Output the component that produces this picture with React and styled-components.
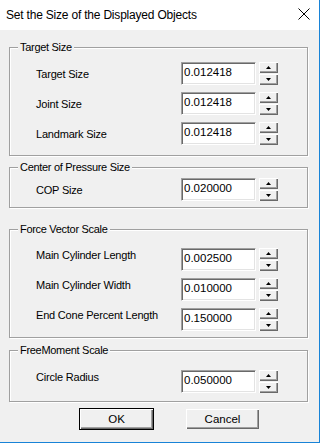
import styled, { createGlobalStyle } from "styled-components";

const groups = [
  {
    title: "Target Size",
    gapBefore: 17,
    padTop: 14,
    padBottom: 10,
    rowGap: 7,
    raise: 0,
    rows: [
      ["Target Size", "0.012418"],
      ["Joint Size", "0.012418"],
      ["Landmark Size", "0.012418"],
    ],
  },
  {
    title: "Center of Pressure Size",
    gapBefore: 11,
    padTop: 10,
    padBottom: 6,
    rowGap: 7,
    raise: 0,
    rows: [["COP Size", "0.020000"]],
  },
  {
    title: "Force Vector Scale",
    gapBefore: 21,
    padTop: 18,
    padBottom: 6,
    rowGap: 7,
    raise: 5,
    rows: [
      ["Main Cylinder Length", "0.002500"],
      ["Main Cylinder Width", "0.010000"],
      ["End Cone Percent Length", "0.150000"],
    ],
  },
  {
    title: "FreeMoment Scale",
    gapBefore: 12,
    padTop: 19,
    padBottom: 8,
    rowGap: 7,
    raise: 5,
    rows: [["Circle Radius", "0.050000"]],
  },
];

function Arrow({ down }) {
  return (
    <svg width="5" height="3" viewBox="0 0 5 3">
      <polygon points={down ? "0,0 5,0 2.5,3" : "0,3 5,3 2.5,0"} fill="#000" />
    </svg>
  );
}

function SpinRow({ label, value, raise }) {
  return (
    <Row>
      <Label raise={raise}>{label}</Label>
      <Input>{value}</Input>
      <Spinner>
        <SpinButton>
          <Arrow />
        </SpinButton>
        <SpinButton>
          <Arrow down />
        </SpinButton>
      </Spinner>
    </Row>
  );
}

export default function App() {
  return (
    <>
      <GlobalStyle />
      <Window>
        <TitleBar>
          <Title>Set the Size of the Displayed Objects</Title>
          <Close>
            <svg width="12" height="12" viewBox="0 0 12 12">
              <path d="M0.5 0.5 L11.5 11.5 M11.5 0.5 L0.5 11.5" stroke="#000" strokeWidth="1" />
            </svg>
          </Close>
        </TitleBar>
        <Body>
          {groups.map((g) => (
            <Group
              key={g.title}
              gapBefore={g.gapBefore}
              padTop={g.padTop}
              padBottom={g.padBottom}
              rowGap={g.rowGap}
            >
              <Legend>{g.title}</Legend>
              {g.rows.map(([label, value]) => (
                <SpinRow key={label} label={label} value={value} raise={g.raise} />
              ))}
            </Group>
          ))}
          <ButtonRow>
            <Button primary>OK</Button>
            <Button>Cancel</Button>
          </ButtonRow>
        </Body>
      </Window>
    </>
  );
}

const GlobalStyle = createGlobalStyle`
  html, body {
    margin: 0;
    padding: 0;
    background: #f0f0f0;
  }
  body {
    font-family: "Liberation Sans", Arial, sans-serif;
  }
`;

const Window = styled.div`
  width: 320px;
  height: 443px;
  box-sizing: border-box;
  display: flex;
  flex-direction: column;
  border-right: 1px solid #1883d7;
  border-bottom: 1px solid #1883d7;
  background: #f0f0f0;
`;

const TitleBar = styled.div`
  height: 30px;
  flex: none;
  display: flex;
  align-items: center;
  justify-content: space-between;
  padding: 0 9px 0 6px;
  background: #fff;
`;

const Title = styled.span`
  font-size: 12px;
  color: #000;
  letter-spacing: -0.2px;
  margin-top: -1px;
`;

const Close = styled.span`
  display: flex;
  margin-top: -2px;
`;

const Body = styled.div`
  flex: 1;
  display: flex;
  flex-direction: column;
  padding: 0 11px 0 9px;
`;

const Group = styled.div`
  position: relative;
  margin-top: ${({ gapBefore }) => gapBefore}px;
  padding: ${({ padTop }) => padTop}px 0 ${({ padBottom }) => padBottom}px;
  display: flex;
  flex-direction: column;
  gap: ${({ rowGap }) => rowGap}px;
  border: 1px solid #a0a0a0;
  box-shadow: 1px 1px 0 #fff, inset 1px 1px 0 #fff;
`;

const Legend = styled.span`
  position: absolute;
  top: -7px;
  left: 8px;
  padding: 0 2px;
  background: #f0f0f0;
  font-size: 11px;
  line-height: 13px;
  letter-spacing: -0.3px;
  color: #000;
`;

const Row = styled.div`
  display: grid;
  grid-template-columns: 1fr 75px 19px;
  column-gap: 3px;
  height: 23px;
  padding: 0 29px 0 26px;
`;

const Label = styled.span`
  align-self: center;
  padding-bottom: ${({ raise }) => raise * 2}px;
  font-size: 11px;
  letter-spacing: -0.2px;
  color: #000;
  white-space: nowrap;
`;

const Input = styled.div`
  box-sizing: border-box;
  height: 23px;
  padding: 3px 0 0 2px;
  background: #fff;
  border-top: 1px solid #a0a0a0;
  border-left: 1px solid #a0a0a0;
  border-right: 1px solid #fff;
  border-bottom: 1px solid #fff;
  box-shadow: inset 1px 1px 0 #696969, inset -1px -1px 0 #e3e3e3;
  font-size: 11.5px;
  color: #000;
`;

const Spinner = styled.div`
  display: flex;
  flex-direction: column;
  gap: 1px;
`;

const SpinButton = styled.div`
  flex: 1;
  display: flex;
  align-items: center;
  justify-content: center;
  background: #f0f0f0;
  box-shadow: inset 1px 1px 0 #fff, inset -1px -1px 0 #696969, inset -2px -2px 0 #a0a0a0;
`;

const ButtonRow = styled.div`
  display: flex;
  gap: 31px;
  margin-top: 6px;
  padding-left: 70px;
`;

const Button = styled.div`
  box-sizing: border-box;
  width: 75px;
  height: 22px;
  display: flex;
  align-items: center;
  justify-content: center;
  background: #f0f0f0;
  font-size: 11.5px;
  color: #000;
  border: 1px solid ${({ primary }) => (primary ? "#000" : "#f0f0f0")};
  box-shadow: inset 1px 1px 0 #fff, inset -1px -1px 0 #696969, inset -2px -2px 0 #a0a0a0;
`;
